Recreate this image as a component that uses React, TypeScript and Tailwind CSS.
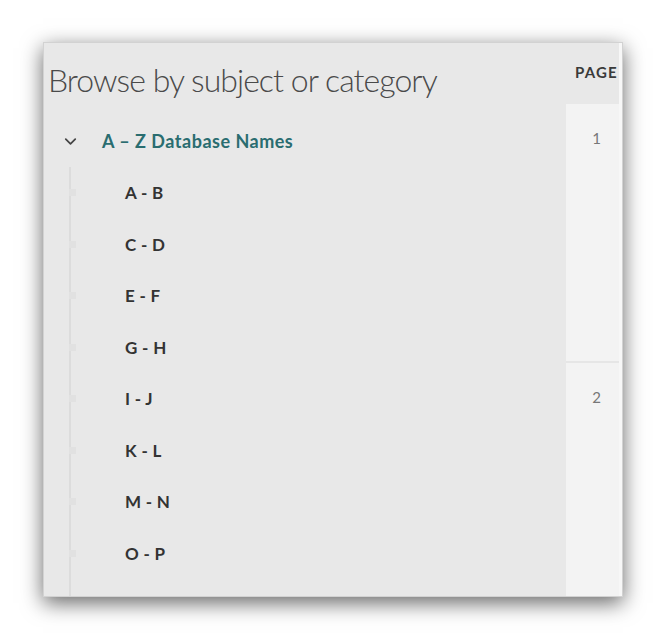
import { ChevronDown } from 'lucide-react'

const ranges = ['A - B', 'C - D', 'E - F', 'G - H', 'I - J', 'K - L', 'M - N', 'O - P']

export default function App() {
  return (
    <main className="w-[666px] h-[640px] bg-white overflow-hidden pt-[42px] pl-[43px]" style={{ fontFamily: 'Lato, "Open Sans", sans-serif' }}>
      <div className="w-[580px] h-[555px] bg-[#e8e8e8] border border-[#d2d2d2] shadow-[0_6px_20px_rgba(0,0,0,0.6)] flex overflow-hidden">
        <div className="flex-1 flex flex-col">
          <div className="h-[72px] pl-[4px] pt-[21px]">
            <h1 className="text-[32px] leading-none font-light text-[#4a4a4a] tracking-[-0.95px]">
              Browse by subject or category
            </h1>
          </div>
          <div className="h-[52px] flex items-center pl-[17px]">
            <ChevronDown className="w-[19px] h-[19px] text-[#444]" strokeWidth={2.2} />
            <span className="ml-[22px] text-[18px] font-bold text-[#2a6d70] tracking-[0.5px]">A – Z Database Names</span>
          </div>
          <div className="flex-1 ml-[25px] border-l-2 border-[#dcdcdc]">
            {ranges.map((r) => (
              <div key={r} className="h-[51.5px] flex items-center">
                <span className="w-[7px] h-[7px] -ml-[2px] bg-[#e1e1e1]" />
                <span className="ml-[49px] text-[17px] font-bold text-[#333] tracking-[0.3px]">{r}</span>
              </div>
            ))}
          </div>
        </div>
        <div className="w-[56px] flex flex-col border-r-[3px] border-[#f7f7f7]">
          <div className="h-[61px] pt-[18px] pl-[9px] text-[15px] font-bold text-[#3a3a3a] tracking-[1.2px] whitespace-nowrap">PAGE</div>
          <div className="h-[259px] bg-[#f3f3f3] border-b-2 border-[#e6e6e6] pt-[23px] pl-[8px] text-center text-[15px] text-[#777]">1</div>
          <div className="flex-1 bg-[#f3f3f3] pt-[23px] pl-[8px] text-center text-[15px] text-[#777]">2</div>
        </div>
      </div>
    </main>
  )
}
